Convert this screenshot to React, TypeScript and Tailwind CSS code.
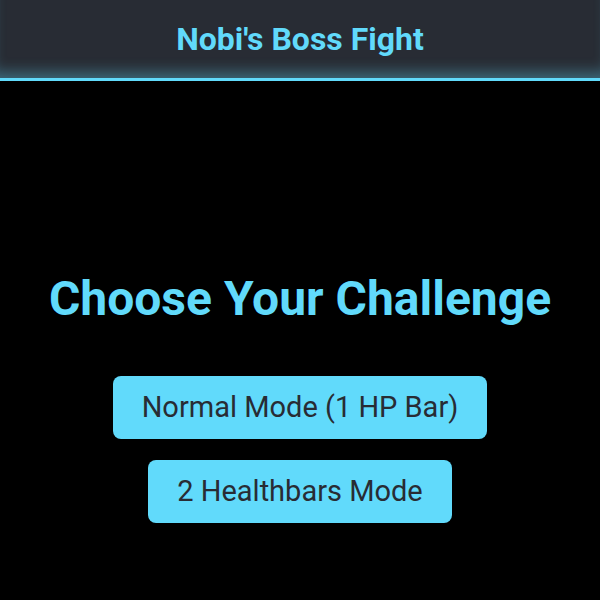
import React from 'react';

const App: React.FC = () => {
  const modes = ['Normal Mode (1 HP Bar)', '2 Healthbars Mode'];

  return (
    <div className="min-h-screen bg-black text-white flex flex-col" style={{ fontFamily: 'Roboto, "Liberation Sans", sans-serif' }}>
      <header className="h-[81px] bg-[#282c34] border-b-[3px] border-[#61dafb] shadow-[inset_0_-14px_14px_-8px_rgba(97,218,251,0.35)] flex items-center justify-center">
        <h1 className="text-[32px] font-bold text-[#61dafb] leading-none">Nobi's Boss Fight</h1>
      </header>

      <main className="flex flex-col items-center pt-[188px]">
        <h2 className="text-[48px] font-bold text-[#61dafb] leading-tight mb-[47px]">Choose Your Challenge</h2>
        <div className="flex flex-col items-center gap-[21px]">
          {modes.map((m) => (
            <button
              key={m}
              className="bg-[#61dafb] text-[#282c34] text-[29px] px-[29px] h-[63px] rounded-lg"
            >
              {m}
            </button>
          ))}
        </div>
      </main>
    </div>
  );
};

export default App;
